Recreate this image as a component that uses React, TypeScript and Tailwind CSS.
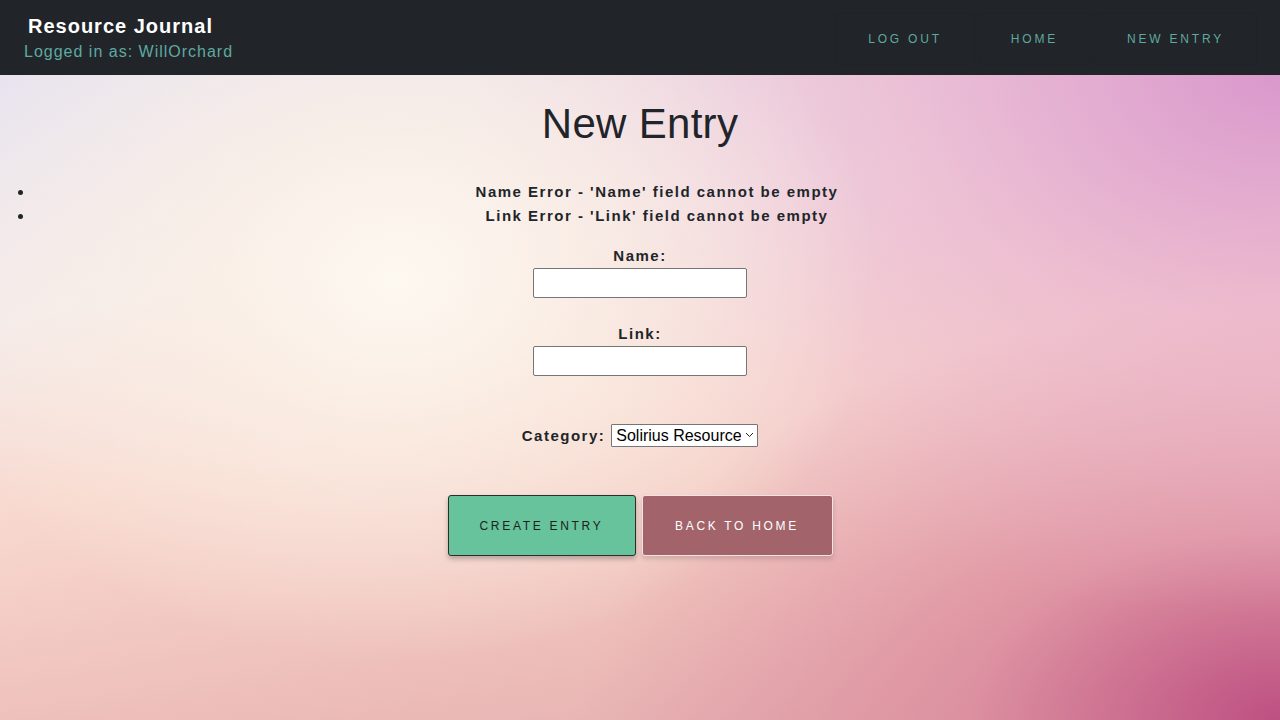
import React from 'react';

const NavLink: React.FC<{ label: string }> = ({ label }) => (
  <a
    href="#"
    className="flex h-[52px] items-center rounded-[4px] border border-[#1f2226] bg-[#212428] px-[32px] text-[12px] uppercase tracking-[2.8px] text-[#5fa9a0]"
  >
    {label}
  </a>
);

const App: React.FC = () => {
  return (
    <div className="flex min-h-[720px] flex-col font-['Liberation_Sans',Arial,sans-serif] text-[#212529]">
      <header className="flex h-[75px] items-center justify-between bg-[#212529] pl-6 pr-[23px]">
        <div className="flex flex-col pt-[3px]">
          <span className="pl-1 text-[20px] font-bold leading-[26px] tracking-[1px] text-white">Resource Journal</span>
          <span className="text-[16px] leading-[26px] tracking-[1px] text-[#5fa9a0]">Logged in as: WillOrchard</span>
        </div>
        <nav className="flex gap-[3px] pt-[2px]">
          <NavLink label="Log Out" />
          <NavLink label="Home" />
          <NavLink label="New Entry" />
        </nav>
      </header>

      <main className="flex-1 bg-[radial-gradient(ellipse_480px_380px_at_31%_32%,rgba(253,248,240,1)_0%,rgba(251,240,230,0.75)_40%,rgba(251,240,230,0)_100%),radial-gradient(ellipse_850px_540px_at_100%_0%,rgba(218,152,204,1)_0%,rgba(233,176,205,0.7)_45%,rgba(240,200,210,0)_100%),radial-gradient(ellipse_700px_420px_at_100%_100%,rgba(190,80,130,1)_0%,rgba(215,125,150,0.6)_45%,rgba(230,160,170,0)_100%),linear-gradient(170deg,#e7e3ef_0%,#f4ebea_28%,#f8d9cf_50%,#eebfba_76%,#e0a8ac_100%)] pb-10">
        <h1 className="mt-[24px] text-center text-[42px] font-normal leading-[50px] tracking-[0.3px]">New Entry</h1>

        <ul className="mt-[31px] list-disc pl-[34px] text-[15px] font-bold leading-[24px] tracking-[1.5px]">
          <li className="text-center">Name Error - 'Name' field cannot be empty</li>
          <li className="text-center">Link Error - 'Link' field cannot be empty</li>
        </ul>

        <form className="mt-[16px] flex flex-col items-center" onSubmit={(e) => e.preventDefault()}>
          <label className="text-[15px] font-bold leading-[24px] tracking-[1.5px]">Name:</label>
          <input
            type="text"
            className="h-[30px] w-[214px] rounded-[2px] border border-[#767676] bg-white px-1 text-[14px] outline-none"
          />

          <label className="mt-[24px] text-[15px] font-bold leading-[24px] tracking-[1.5px]">Link:</label>
          <input
            type="text"
            className="h-[30px] w-[214px] rounded-[2px] border border-[#767676] bg-white px-1 text-[14px] outline-none"
          />

          <div className="mt-[48px] flex items-center gap-[6px]">
            <label className="text-[15px] font-bold tracking-[1.5px]">Category:</label>
            <div className="relative">
              <select className="h-[23px] w-[147px] appearance-none rounded-[1px] border border-[#767676] bg-white pl-[4px] pr-[16px] text-[16px] leading-[21px] text-black outline-none">
                <option>Solirius Resource</option>
                <option>External Resource</option>
              </select>
              <svg
                className="pointer-events-none absolute right-[4px] top-[8px] h-[6px] w-[9px]"
                viewBox="0 0 9 6"
                fill="none"
                stroke="#222"
                strokeWidth="1"
              >
                <path d="M1 1l3.5 3.5L8 1" />
              </svg>
            </div>
          </div>

          <div className="mt-[47px] flex gap-[6px]">
            <button
              type="submit"
              className="h-[61px] w-[188px] rounded-[3px] border border-[#2a2e2c] bg-[#67c39c] text-[12px] uppercase tracking-[2.7px] text-[#1b1f1d] shadow-[0_3px_5px_rgba(0,0,0,0.25)]"
            >
              Create Entry
            </button>
            <button
              type="button"
              className="h-[61px] w-[191px] rounded-[3px] border border-[#f5e3e3] bg-[#a2646a] text-[12px] uppercase tracking-[2.7px] text-white shadow-[0_3px_5px_rgba(0,0,0,0.15)]"
            >
              Back to Home
            </button>
          </div>
        </form>
      </main>
    </div>
  );
};

export default App;
